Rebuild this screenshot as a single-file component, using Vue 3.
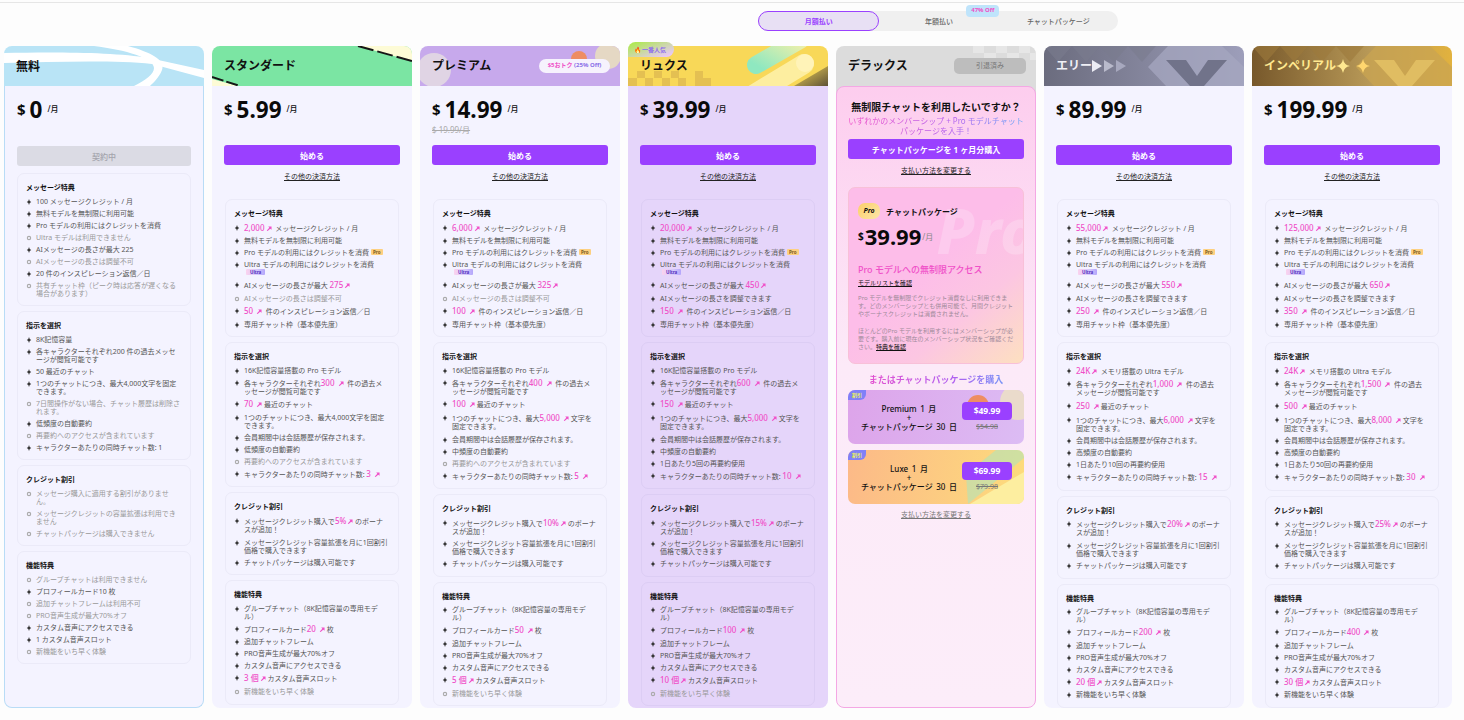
<template>
  <div class="page">
    <div class="top-line"></div>

    <div class="toggle">
      <span class="toggle-item active">月額払い</span>
      <span class="toggle-item">年額払い<em class="off-badge">47% Off</em></span>
      <span class="toggle-item">チャットパッケージ</span>
    </div>

    <div class="plans">
      <div v-for="plan in plans" :key="plan.key" class="plan" :class="'plan-' + plan.key">
        <div class="plan-head" :class="{ light: plan.key === 'elite', gold: plan.key === 'imperial' }">
          <!-- header artwork -->
          <svg class="head-art" viewBox="0 0 200 40" preserveAspectRatio="none">
            <template v-if="plan.key === 'free'">
              <rect width="200" height="40" fill="#b9e4f6" />
              <path d="M0 7 C50 6 110 6 145 12 L200 24 V32 L148 18 C110 14 50 16 0 17Z" fill="#fff" />
              <path d="M90 0 H124 C146 6 162 14 158 24 C155 32 148 38 146 40 H130 C142 34 150 28 150 22 C150 12 122 4 90 0Z" fill="#fff" />
            </template>
            <template v-else-if="plan.key === 'standard'">
              <rect width="200" height="40" fill="#7be5a3" />
              <path d="M146 0 H200 V15Z" fill="#fdfbd6" />
              <path d="M146 0 L200 15" stroke="#161616" stroke-width="2" stroke-dasharray="16 4" />
              <path d="M0 33 L26 40 H0Z" fill="#fdfbd6" />
              <path d="M0 31 L28 40" stroke="#161616" stroke-width="2" stroke-dasharray="12 3" />
            </template>
            <template v-else-if="plan.key === 'premium'">
              <rect width="200" height="40" fill="#c7a9ec" />
              <circle cx="14" cy="24" r="17" fill="#e0d4e4" />
              <circle cx="159" cy="13" r="8" fill="#ee8d62" />
              <circle cx="188" cy="10" r="13" fill="#e5d8c4" />
            </template>
            <template v-else-if="plan.key === 'luxe'">
              <defs>
                <linearGradient id="lx1" x1="0" y1="1" x2="1" y2="0">
                  <stop offset="0" stop-color="#8fe8c0" />
                  <stop offset="1" stop-color="#f4f0a8" />
                </linearGradient>
                <linearGradient id="lx2" x1="0" y1="0" x2="1" y2="1">
                  <stop offset="0" stop-color="#f8d858" />
                  <stop offset="1" stop-color="#5e5236" />
                </linearGradient>
              </defs>
              <rect width="200" height="40" fill="#f8d858" />
              <path d="M9 25h8v7H9zM26 25h8v7h-8zM43 25h8v7h-8zM67 25h8v7h-8zM0 32h9v8H0zM17 32h8v8h-8zM34 32h8v8h-8zM50 32h8v8h-8zM67 32h16v8H67z" fill="#e4c052" />
              <path d="M128 19 L172 -6" stroke="url(#lx1)" stroke-width="18" stroke-linecap="round" />
              <path d="M120 52 L176 18" stroke="#fdeea0" stroke-width="20" stroke-linecap="round" />
              <circle cx="177" cy="17" r="9" fill="#fff3b8" />
              <path d="M166 40 L200 20 V40Z" fill="url(#lx2)" />
            </template>
            <template v-else-if="plan.key === 'deluxe'">
              <path d="M137 0h11v7h-11zM160 0h11v7h-11zM183 0h11v7h-11zM148 7h12v7h-12zM171 7h12v7h-12zM194 7h6v7h-6z" fill="#e6e6e6" />
            </template>
            <template v-else-if="plan.key === 'elite'">
              <defs>
                <linearGradient id="el1" x1="0" y1="0" x2="1" y2="0">
                  <stop offset="0" stop-color="#6b6c7e" />
                  <stop offset="1" stop-color="#9d9eba" />
                </linearGradient>
              </defs>
              <rect width="200" height="40" fill="url(#el1)" />
              <path d="M0 0 L14 16 L28 0 L42 16 L56 0 L70 16 L84 0 L98 16 L112 0Z" fill="#7a7b8e" opacity="0.6" />
              <path d="M104 21 L124 0 H178 L200 21 V40 H122Z" fill="#a6a7c0" opacity="0.75" />
              <path d="M122 14 H142 L153 30 L164 14 H183 L160 40 H146Z" fill="#71738a" />
            </template>
            <template v-else>
              <defs>
                <linearGradient id="im1" x1="0" y1="0" x2="1" y2="0">
                  <stop offset="0" stop-color="#77582b" />
                  <stop offset="0.6" stop-color="#b99a58" />
                  <stop offset="1" stop-color="#e2b23e" />
                </linearGradient>
              </defs>
              <rect width="200" height="40" fill="url(#im1)" />
              <path d="M0 0 L14 16 L28 0 L42 16 L56 0 L70 16 L84 0 L98 16 L112 0Z" fill="#9c7a3c" opacity="0.6" />
              <path d="M104 21 L124 0 H178 L200 21 V40 H122Z" fill="#c9a452" opacity="0.75" />
              <path d="M122 14 H142 L153 30 L164 14 H183 L160 40 H146Z" fill="#e0bd62" />
            </template>
          </svg>

          <span class="plan-name">{{ plan.name }}</span>
          <svg v-if="plan.key === 'elite'" class="name-icons" width="34" height="12" viewBox="0 0 34 14" preserveAspectRatio="none">
            <path d="M0 0 L10 7 L0 14Z" fill="#ececf4" />
            <path d="M12 0 L22 7 L12 14Z" fill="#b9bacb" />
            <path d="M24 0 L34 7 L24 14Z" fill="#a7a8be" />
          </svg>
          <svg v-if="plan.key === 'imperial'" class="name-icons" width="34" height="14" viewBox="0 0 34 14">
            <path d="M7 0 Q8 6 14 7 Q8 8 7 14 Q6 8 0 7 Q6 6 7 0Z" fill="#ffe890" />
            <path d="M27 0 Q28 6 34 7 Q28 8 27 14 Q26 8 20 7 Q26 6 27 0Z" fill="#ffd66e" />
          </svg>
          <span v-if="plan.key === 'premium'" class="deal"><b>$5おトク</b> <i>(25% Off)</i></span>
          <span v-if="plan.key === 'luxe'" class="popular">🔥<span>一番人気</span></span>
          <span v-if="plan.key === 'deluxe'" class="retired">引退済み</span>
        </div>

        <!-- Deluxe has the chat package pitch instead of benefit lists -->
        <div v-if="plan.key === 'deluxe'" class="pitch">
          <h3 class="pitch-title">無制限チャットを利用したいですか？</h3>
          <p class="pitch-sub rainbow">いずれかのメンバーシップ + Pro モデルチャットパッケージを入手！</p>
          <button class="buy-btn">チャットパッケージを 1 ヶ月分購入</button>
          <a class="pay-link">支払い方法を変更する</a>

          <div class="pro-box">
            <span class="pro-mark">Pro</span>
            <div class="pro-head">
              <span class="pro-chip">Pro</span>
              <span>チャットパッケージ</span>
            </div>
            <div class="pro-price"><span class="pp-cur">$</span><strong>39.99</strong><span class="pp-unit">/月</span></div>
            <div class="pro-access">Pro モデルへの無制限アクセス</div>
            <a class="model-link">モデルリストを確認</a>
            <p class="pro-text">Pro モデルを無制限でクレジット消費なしに利用できます。どのメンバーシップとも併用可能で、月間クレジットやボーナスクレジットは消費されません。</p>
            <p class="pro-text">ほとんどのPro モデルを利用するにはメンバーシップが必要です。購入前に現在のメンバーシップ状況をご確認ください。<a>特典を確認</a></p>
          </div>

          <div class="bundle-title rainbow">またはチャットパッケージを購入</div>
          <div v-for="b in bundles" :key="b.name" class="bundle" :class="b.cls">
            <svg v-if="b.cls === 'b-premium'" class="bundle-art" viewBox="0 0 176 54" preserveAspectRatio="none">
              <circle cx="130" cy="16" r="11" fill="#ee8d62" />
              <circle cx="170" cy="12" r="18" fill="#eadbcb" />
            </svg>
            <svg v-else class="bundle-art" viewBox="0 0 176 54" preserveAspectRatio="none">
              <path d="M120 54 L176 8 V0 H148 L118 24Z" fill="#a9e6c0" opacity="0.55" />
              <path d="M122 54 L176 22 V54Z" fill="#fdeea0" />
            </svg>
            <span class="bundle-tag">割引</span>
            <div class="bundle-name">{{ b.name }} 1 月<br />+<br />チャットパッケージ 30 日</div>
            <div class="bundle-buy">
              <span class="bundle-price">{{ b.price }}</span>
              <s>{{ b.old }}</s>
            </div>
          </div>
          <a class="pay-link muted">支払い方法を変更する</a>
        </div>

        <div v-else class="plan-body">
          <div class="price-block">
            <div class="price">
              <span class="cur">$</span>
              <strong>{{ plan.price }}</strong>
              <span class="unit">/月</span>
            </div>
            <s v-if="plan.old" class="old-price">$ {{ plan.old }}/月</s>
          </div>

          <button v-if="plan.key === 'free'" class="current-btn">契約中</button>
          <template v-else>
            <button class="buy-btn">始める</button>
            <a class="pay-link other">その他の決済方法</a>
          </template>

          <div class="sections">
            <section v-for="sec in plan.sections" :key="sec.title" class="section">
              <h4>{{ sec.title }}</h4>
              <ul>
                <li v-for="row in sec.rows" :key="row" :class="{ off: row[0] === '~', hl: row.includes('{') }">
                  <svg v-if="row[0] === '~'" class="bullet" viewBox="0 0 8 8"><circle cx="4" cy="4" r="2.2" fill="none" stroke="#aaa" stroke-width="1.5" /></svg>
                  <svg v-else class="bullet" viewBox="0 0 8 8"><path d="M4 0 Q4.4 3.4 7 4 Q4.4 4.6 4 8 Q3.6 4.6 1 4 Q3.6 3.4 4 0Z" fill="#333" /></svg>
                  <span class="row-text">
                    <template v-for="(seg, i) in parseRow(row)" :key="i">
                      <template v-if="seg.type === 'hl'">
                        <span class="pink">{{ seg.text }}</span><svg class="arrow" viewBox="0 0 8 8"><path d="M1 7.2 L4.4 3.8 L3 2 H7.4 V6.4 L5.6 5 L2.2 8Z" fill="#f050c8" /></svg>
                      </template>
                      <span v-else-if="seg.type === 'pro'" class="tag tag-pro">Pro</span>
                      <span v-else-if="seg.type === 'ultra'" class="tag tag-ultra">Ultra</span>
                      <template v-else>{{ seg.text }}</template>
                    </template>
                  </span>
                </li>
              </ul>
            </section>
          </div>
        </div>
      </div>
    </div>
  </div>
</template>

<script setup>
const parseRow = (row) => {
  const text = row[0] === "~" ? row.slice(1) : row;
  return text
    .split(/(\{[^}]*\}|\[pro\]|\[ultra\])/)
    .filter(Boolean)
    .map((part) => {
      if (part === "[pro]") return { type: "pro" };
      if (part === "[ultra]") return { type: "ultra" };
      if (part[0] === "{") return { type: "hl", text: part.slice(1, -1) };
      return { type: "text", text: part };
    });
};

// Paid plans share the same rows, only the numbers change
const paidSections = (p) => [
  {
    title: "メッセージ特典",
    rows: [
      `{${p.credits}}  メッセージクレジット / 月`,
      "無料モデルを無制限に利用可能",
      "Pro モデルの利用にはクレジットを消費[pro]",
      "Ultra モデルの利用にはクレジットを消費[ultra]",
      `AIメッセージの長さが最大 {${p.length}}`,
      p.adjust ? "AIメッセージの長さを調整できます" : "~AIメッセージの長さは調整不可",
      `{${p.inspire} }  件のインスピレーション返信／日`,
      "専用チャット枠（基本優先度）",
    ],
  },
  {
    title: "指示を選択",
    rows: [
      p.model,
      `各キャラクターそれぞれ{${p.history} }  件の過去メッセージが閲覧可能です`,
      `{${p.recent} } 最近のチャット`,
      p.pinHl
        ? `1つのチャットにつき、最大{${p.pin} } 文字を固定できます。`
        : `1つのチャットにつき、最大${p.pin}文字を固定できます。`,
      "会員期間中は会話履歴が保存されます。",
      `${p.summary}の自動要約`,
      p.resummary,
      `キャラクターあたりの同時チャット数: {${p.chats} }`,
    ],
  },
  {
    title: "クレジット割引",
    rows: [
      `メッセージクレジット購入で{${p.bonus}} のボーナスが追加！`,
      "メッセージクレジット容量拡張を月に1回割引価格で購入できます",
      "チャットパッケージは購入可能です",
    ],
  },
  {
    title: "機能特典",
    rows: [
      "グループチャット（8K記憶容量の専用モデル）",
      `プロフィールカード{${p.cards} } 枚`,
      "追加チャットフレーム",
      "PRO音声生成が最大70%オフ",
      "カスタム音声にアクセスできる",
      `{${p.voices} 個} カスタム音声スロット`,
      p.early ? "新機能をいち早く体験" : "~新機能をいち早く体験",
    ],
  },
];

const plans = [
  {
    key: "free",
    name: "無料",
    price: "0",
    sections: [
      {
        title: "メッセージ特典",
        rows: [
          "100 メッセージクレジット / 月",
          "無料モデルを無制限に利用可能",
          "Pro モデルの利用にはクレジットを消費",
          "~Ultra モデルは利用できません",
          "AIメッセージの長さが最大 225",
          "~AIメッセージの長さは調整不可",
          "20 件のインスピレーション返信／日",
          "~共有チャット枠（ピーク時は応答が遅くなる場合があります）",
        ],
      },
      {
        title: "指示を選択",
        rows: [
          "8K記憶容量",
          "各キャラクターそれぞれ200 件の過去メッセージが閲覧可能です",
          "50 最近のチャット",
          "1つのチャットにつき、最大4,000文字を固定できます。",
          "~7日間操作がない場合、チャット履歴は削除されます。",
          "低頻度の自動要約",
          "~再要約へのアクセスが含まれています",
          "キャラクターあたりの同時チャット数: 1",
        ],
      },
      {
        title: "クレジット割引",
        rows: [
          "~メッセージ購入に適用する割引がありません。",
          "~メッセージクレジットの容量拡張は利用できません",
          "~チャットパッケージは購入できません",
        ],
      },
      {
        title: "機能特典",
        rows: [
          "~グループチャットは利用できません",
          "プロフィールカード10 枚",
          "~追加チャットフレームは利用不可",
          "~PRO音声生成が最大70%オフ",
          "カスタム音声にアクセスできる",
          "1 カスタム音声スロット",
          "~新機能をいち早く体験",
        ],
      },
    ],
  },
  {
    key: "standard",
    name: "スタンダード",
    price: "5.99",
    sections: paidSections({
      credits: "2,000", length: "275", inspire: "50", adjust: false,
      model: "16K記憶容量搭載の Pro モデル", history: "300", recent: "70", pin: "4,000",
      summary: "低頻度", resummary: "~再要約へのアクセスが含まれています", chats: "3",
      bonus: "5%", cards: "20", voices: "3",
    }),
  },
  {
    key: "premium",
    name: "プレミアム",
    price: "14.99",
    old: "19.99",
    sections: paidSections({
      credits: "6,000", length: "325", inspire: "100", adjust: false,
      model: "16K記憶容量搭載の Pro モデル", history: "400", recent: "100", pin: "5,000", pinHl: true,
      summary: "中頻度", resummary: "~再要約へのアクセスが含まれています", chats: "5",
      bonus: "10%", cards: "50", voices: "5",
    }),
  },
  {
    key: "luxe",
    name: "リュクス",
    price: "39.99",
    sections: paidSections({
      credits: "20,000", length: "450", inspire: "150", adjust: true,
      model: "16K記憶容量搭載の Pro モデル", history: "600", recent: "150", pin: "5,000", pinHl: true,
      summary: "中頻度", resummary: "1日あたり5回の再要約使用", chats: "10",
      bonus: "15%", cards: "100", voices: "10",
    }),
  },
  { key: "deluxe", name: "デラックス" },
  {
    key: "elite",
    name: "エリー",
    price: "89.99",
    sections: paidSections({
      credits: "55,000", length: "550", inspire: "250", adjust: true,
      model: "{24K}  メモリ搭載の Ultra モデル", history: "1,000", recent: "250", pin: "6,000", pinHl: true,
      summary: "高頻度", resummary: "1日あたり10回の再要約使用", chats: "15",
      bonus: "20%", cards: "200", voices: "20", early: true,
    }),
  },
  {
    key: "imperial",
    name: "インペリアル",
    price: "199.99",
    sections: paidSections({
      credits: "125,000", length: "650", inspire: "350", adjust: true,
      model: "{24K}  メモリ搭載の Ultra モデル", history: "1,500", recent: "500", pin: "8,000", pinHl: true,
      summary: "高頻度", resummary: "1日あたり50回の再要約使用", chats: "30",
      bonus: "25%", cards: "400", voices: "30", early: true,
    }),
  },
];

const bundles = [
  { name: "Premium", price: "$49.99", old: "$54.98", cls: "b-premium" },
  { name: "Luxe", price: "$69.99", old: "$79.98", cls: "b-luxe" },
];
</script>

<style scoped>
.page {
  width: 1464px;
  height: 720px;
  overflow: hidden;
  background: #fdfdfd;
  font-family: "Noto Sans", "Noto Sans CJK JP", sans-serif;
  padding-top: 2px;
  box-sizing: border-box;
}

.top-line {
  height: 1px;
  background: #e6e6e6;
}

.toggle {
  display: flex;
  width: 360px;
  height: 20px;
  margin: 8px 0 15px 758px;
  border-radius: 10px;
  background: #f0f0f0;
}

.toggle-item {
  position: relative;
  flex: 1;
  display: flex;
  align-items: center;
  justify-content: center;
  font-size: 7px;
  font-weight: 500;
  color: #666;
  box-sizing: border-box;
}

.toggle-item.active {
  color: #9a40ff;
  font-weight: 700;
  background: #e8e0f4;
  border: 1px solid #9a40ff;
  border-radius: 10px;
}

.off-badge {
  position: absolute;
  top: -6px;
  left: 87px;
  width: 33px;
  height: 12px;
  border-radius: 4px;
  background: #bfe4fb;
  color: #f050c8;
  font-size: 6px;
  font-weight: 700;
  font-style: normal;
  line-height: 11px;
  text-align: center;
}

.plans {
  display: grid;
  grid-template-columns: repeat(7, 200px);
  gap: 8px;
  padding-left: 4px;
  height: 661px;
}

.plan {
  display: flex;
  flex-direction: column;
  min-width: 0;
}

.plan-head {
  position: relative;
  display: flex;
  align-items: center;
  height: 40px;
  padding-left: 12px;
  flex: none;
  color: #111;
}

.head-art {
  position: absolute;
  inset: 0;
  width: 200px;
  height: 40px;
  border-radius: 8px 8px 0 0;
  overflow: hidden;
}

.plan-name {
  position: relative;
  font-size: 12px;
  font-weight: 700;
  line-height: 14px;
}

.plan-free .plan-name {
  margin-top: 1px;
}

.plan-head.light .plan-name {
  color: #f0f0f6;
}

.plan-head.gold .plan-name {
  color: #ffe890;
}

.name-icons {
  position: relative;
}

.deal {
  position: absolute;
  left: 119px;
  top: 13px;
  width: 71px;
  height: 14px;
  border-radius: 7px;
  background: #f6f2fd;
  font-size: 6px;
  line-height: 13px;
  text-align: center;
  white-space: nowrap;
}

.deal b {
  color: #f050c8;
}

.deal i {
  color: #8a70e8;
  font-style: normal;
  font-weight: 700;
}

.popular {
  position: absolute;
  left: 0;
  top: -4px;
  width: 46px;
  height: 15px;
  display: flex;
  align-items: center;
  gap: 1px;
  padding-left: 6px;
  box-sizing: border-box;
  border-radius: 8px 8px 8px 0;
  background: linear-gradient(160deg, #a8ec40, #e8c8f8 90%);
  font-size: 6px;
  font-weight: 700;
  color: #8f6cf0;
}

.retired {
  position: absolute;
  left: 118px;
  top: 12px;
  width: 72px;
  height: 16px;
  border-radius: 5px;
  background: #bdbdbd;
  color: #777;
  font-size: 7px;
  line-height: 16px;
  text-align: center;
}

.plan-body {
  flex: 1;
  padding: 0 12px;
  border-radius: 0 0 8px 8px;
  background: #f4f3ff;
}

.plan-free .plan-body {
  border: 1px solid #b9dcf6;
  border-top: 0;
}

.plan-luxe .plan-body {
  background: #e5d5fa;
}

.plan-luxe .section {
  border-color: #dccdf4;
}

.price-block {
  height: 59px;
  padding-top: 11px;
  box-sizing: border-box;
}

.plan-free .price-block {
  height: 60px;
}

.price {
  display: flex;
  align-items: center;
  height: 26px;
  color: #0a0a0a;
}

.cur {
  font-size: 15px;
  font-weight: 700;
  margin-right: 4px;
  margin-top: -3px;
}

.price strong {
  font-size: 22.5px;
  font-weight: 700;
  line-height: 26px;
}

.unit {
  font-size: 8px;
  font-weight: 500;
  margin-left: 5px;
  margin-top: -3px;
}

.old-price {
  display: block;
  margin-top: 1px;
  font-size: 8px;
  line-height: 11px;
  color: #aaa;
}

.current-btn,
.buy-btn {
  display: block;
  width: 100%;
  height: 20px;
  padding: 0;
  border: none;
  border-radius: 3px;
  font-family: inherit;
  font-size: 8px;
  font-weight: 700;
}

.current-btn {
  background: #dbdbe4;
  color: #a4a4ac;
  font-weight: 500;
  margin-bottom: 7px;
}

.buy-btn {
  background: #9a40ff;
  color: #fff;
}

.pay-link {
  display: block;
  width: fit-content;
  margin: 7px auto 0;
  font-size: 7px;
  line-height: 10px;
  color: #222;
  text-decoration: underline;
}

.pay-link.other {
  margin-bottom: 17px;
}

.sections {
  display: flex;
  flex-direction: column;
  gap: 5px;
}

.plan-standard .sections,
.plan-premium .sections,
.plan-luxe .sections,
.plan-elite .sections,
.plan-imperial .sections {
  margin: 0 1px;
}

.section {
  padding: 9px 9px 7.5px 8px;
  border: 1px solid #ebeaf8;
  border-radius: 7px;
}

.section h4 {
  margin: 0 0 5.5px;
  font-size: 7px;
  line-height: 9px;
  font-weight: 700;
  color: #111;
}

.section ul {
  display: flex;
  flex-direction: column;
  gap: 4px;
  margin: 0;
  padding: 0;
  list-style: none;
}

.section li {
  position: relative;
  padding: 0 1px 0 10px;
  font-size: 7px;
  line-height: 8px;
  color: #555;
}

.section li.hl {
  margin-bottom: 0.7px;
}

.section li.hl:last-child {
  margin-bottom: 0;
}

.section li.off {
  color: #999;
}

.bullet {
  position: absolute;
  left: 0;
  top: 1px;
  width: 6px;
  height: 6px;
}

.row-text {
  display: block;
  white-space: pre-wrap;
}

.pink {
  color: #f050c8;
  font-size: 8px;
  font-weight: 500;
}

.arrow {
  display: inline-block;
  width: 6px;
  height: 6px;
  margin: 0 0 0 1px;
}

.tag {
  display: inline-block;
  height: 6px;
  margin-left: 2px;
  padding: 0 2px;
  border-radius: 1px;
  font-size: 4.5px;
  font-weight: 700;
  line-height: 6px;
  vertical-align: 1px;
}

.tag-pro {
  background: #fdd080;
  color: #7a5a20;
}

.tag-ultra {
  padding: 0 4px;
  background: linear-gradient(90deg, #fbd3ee, #d5c8fb 60%, #b4a6fb);
  color: #5030c0;
}

/* Deluxe column */
.plan-deluxe {
  background: linear-gradient(#dcdcdc 60px, transparent 60px);
  border-radius: 8px;
}

.pitch {
  flex: 1;
  padding: 14px 11px 0;
  border: 1px solid #f4a8e4;
  border-radius: 8px;
  background: linear-gradient(#fdcdee, #fceaf8 45%, #fcedf9);
}

.pitch-title {
  margin: 0;
  font-size: 10px;
  line-height: 12px;
  font-weight: 700;
  color: #111;
  text-align: center;
  white-space: nowrap;
}

.pitch-sub {
  margin: 3px 0;
  font-size: 8px;
  line-height: 10px;
  text-align: center;
}

.rainbow {
  background: linear-gradient(90deg, #f050c8, #b060f0 60%, #60a8f8);
  -webkit-background-clip: text;
  background-clip: text;
  color: transparent;
}

.pro-box {
  position: relative;
  height: 177px;
  margin-top: 11px;
  padding: 15px 9px 0;
  box-sizing: border-box;
  overflow: hidden;
  border: 1px solid #f8c0d8;
  border-radius: 7px;
  background: linear-gradient(140deg, #fdbde9 45%, #fcc6e2 70%, #fde0c0);
}

.pro-mark {
  position: absolute;
  right: -14px;
  top: 0;
  font-size: 62px;
  font-weight: 800;
  font-style: italic;
  color: rgba(255, 255, 255, 0.22);
}

.pro-head {
  position: relative;
  display: flex;
  align-items: center;
  gap: 6px;
  font-size: 8px;
  font-weight: 700;
  color: #111;
}

.pro-chip {
  width: 22px;
  height: 16px;
  border-radius: 7px;
  background: linear-gradient(135deg, #fdcf6a, #fbe6a8);
  font-size: 7px;
  font-weight: 700;
  font-style: italic;
  line-height: 16px;
  text-align: center;
}

.pro-price {
  position: relative;
  display: flex;
  align-items: center;
  height: 26px;
  margin-top: 4px;
  color: #0a0a0a;
}

.pp-cur {
  font-size: 10px;
  font-weight: 700;
  margin-right: 1px;
}

.pro-price strong {
  font-size: 22px;
  font-weight: 700;
}

.pp-unit {
  margin-left: 1px;
  font-size: 8px;
  color: #888;
}

.pro-access {
  position: relative;
  margin-top: 15px;
  font-size: 9px;
  line-height: 12px;
  font-weight: 500;
  color: #f050c8;
}

.model-link {
  position: relative;
  display: block;
  margin-top: 2px;
  font-size: 6px;
  line-height: 10px;
  color: #111;
  text-decoration: underline;
}

.pro-text {
  position: relative;
  margin: 6px 0 9px;
  font-size: 6px;
  line-height: 8px;
  color: #a08a9a;
}

.pro-text a {
  color: #111;
  text-decoration: underline;
}

.bundle-title {
  margin: 10px 0 4px;
  font-size: 9px;
  line-height: 12px;
  font-weight: 700;
  text-align: center;
}

.bundle {
  position: relative;
  display: flex;
  align-items: center;
  height: 54px;
  margin-bottom: 6px;
  overflow: hidden;
  border-radius: 7px;
}

.bundle-art {
  position: absolute;
  inset: 0;
  width: 100%;
  height: 100%;
}

.b-premium {
  background: linear-gradient(100deg, #dda4ea, #dcbcf4);
}

.b-luxe {
  background: linear-gradient(100deg, #fcb988, #fddc7c);
}

.bundle-tag {
  position: absolute;
  left: 0;
  top: 0;
  width: 18px;
  height: 10px;
  border-radius: 0 0 6px 0;
  background: #8080f8;
  color: #e8f060;
  font-size: 5px;
  font-weight: 700;
  line-height: 10px;
  text-align: center;
}

.bundle-name {
  position: relative;
  width: 114px;
  padding-left: 8px;
  box-sizing: border-box;
  font-size: 8px;
  line-height: 9px;
  font-weight: 500;
  word-spacing: 1.5px;
  color: #111;
  text-align: center;
  white-space: nowrap;
}

.bundle-buy {
  position: relative;
  display: flex;
  flex-direction: column;
  align-items: center;
  width: 50px;
}

.bundle-price {
  width: 50px;
  height: 18px;
  border-radius: 4px;
  background: #9a40ff;
  color: #fff;
  font-size: 8.5px;
  font-weight: 700;
  line-height: 18px;
  text-align: center;
}

.bundle-buy s {
  margin-top: 2px;
  font-size: 7px;
  line-height: 10px;
  color: #777;
}

.pay-link.muted {
  color: #777;
  margin-top: 0;
}
</style>

<style>
html,
body {
  margin: 0;
  background: #fdfdfd;
}
</style>
